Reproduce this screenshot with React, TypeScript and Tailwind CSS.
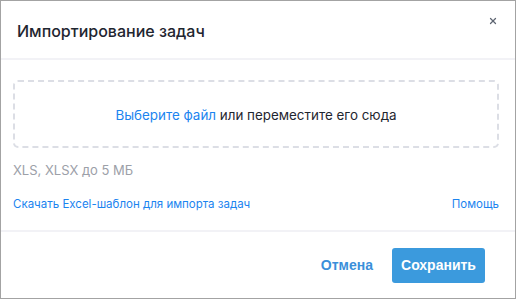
import { X } from "lucide-react";

/**
 * Import-tasks dialog: title bar with close, dashed drop zone, format hint,
 * template download + help links, and Cancel / Save footer.
 */
export default function App() {
  return (
    <div className="flex h-[299px] w-[516px] flex-col border border-[#a3a3a3] bg-white font-['Inter',sans-serif] text-[#1f2630]">
      {/* Header */}
      <header className="flex h-[59px] shrink-0 items-center justify-between border-b-2 border-[#f2f2f6] pl-4 pr-[17px] pt-[3px]">
        <h1 className="text-[16px] font-medium">Импортирование задач</h1>
        <button className="mb-[20px] text-[#5f6673]">
          <X size={10} strokeWidth={3} />
        </button>
      </header>

      {/* Body */}
      <section className="flex flex-col pl-3 pr-4 pt-[20px] pb-[16px]">
        <div className="flex h-[68px] items-center justify-center rounded-[5px] border-2 border-dashed border-[#dcdee5] pt-[3px] text-[13.4px]">
          <span className="text-[#1b84ef]">Выберите файл</span>
          <span>&nbsp;или переместите его сюда</span>
        </div>
        <p className="mt-[12px] text-[13px] leading-5 text-[#9ca0a8]">XLS, XLSX до 5 МБ</p>
        <div className="mt-[14px] flex items-center justify-between text-[11.5px] leading-5 text-[#1b84ef]">
          <a href="#">Скачать Excel-шаблон для импорта задач</a>
          <a href="#">Помощь</a>
        </div>
      </section>

      {/* Footer */}
      <footer className="flex flex-1 items-center justify-end gap-[19px] border-t-2 border-[#f2f2f6] pr-[30px] font-['Liberation_Sans',Arial,sans-serif] text-[14px] font-bold">
        <button className="text-[#3a8fda]">Отмена</button>
        <button className="h-[35px] w-[93px] rounded-[3px] bg-[#3b9add] text-white">Сохранить</button>
      </footer>
    </div>
  );
}
